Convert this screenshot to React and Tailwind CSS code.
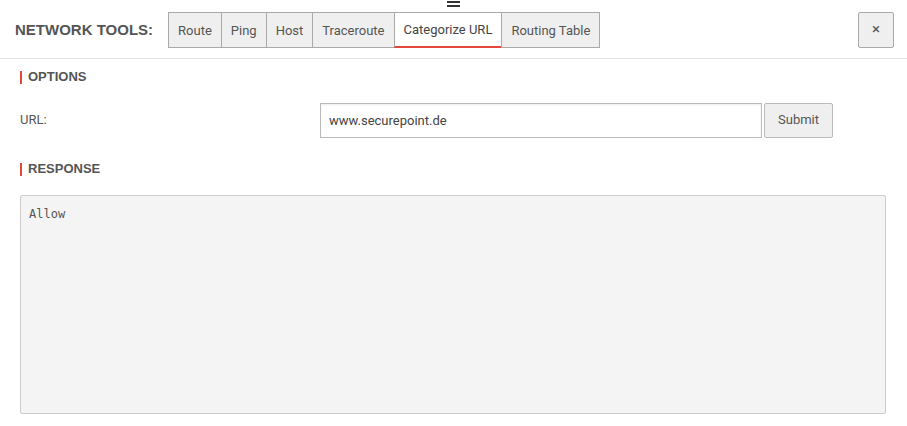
export default function App() {
  const tabs = ["Route", "Ping", "Host", "Traceroute", "Categorize URL", "Routing Table"];
  const active = "Categorize URL";

  return (
    <div className="relative w-[907px] h-[426px] bg-white text-[#555] font-['Roboto','Liberation_Sans',sans-serif] overflow-hidden">
      {/* drag handle */}
      <div className="absolute left-[447px] top-[1px] w-[13px] flex flex-col gap-[2px]">
        <div className="h-[2px] bg-[#333]"></div>
        <div className="h-[2px] bg-[#333]"></div>
      </div>

      {/* header */}
      <div className="flex items-center h-[59px] border-b border-[#e3e3e3] pl-[15px] pr-[13px]">
        <span className="text-[15px] font-bold text-[#555] font-['Liberation_Sans',sans-serif] mr-[15px] mt-[3px]">NETWORK TOOLS:</span>
        <div className="flex h-[36px] mt-[1px]">
          {tabs.map((t) => (
            <button
              key={t}
              className={`relative h-full px-[9px] pt-[2px] -ml-px first:ml-0 text-[13px] border border-[#aaa] ${
                t === active
                  ? "bg-white text-[#444] border-b-[2px] border-b-[#e5483a]"
                  : "bg-[#efefef] text-[#555]"
              }`}
            >
              {t}
            </button>
          ))}
        </div>
        <button className="ml-auto w-[36px] h-[36px] mt-[1px] bg-[#efefef] border border-[#aaa] rounded-[2px] text-[15px] text-[#555] flex items-center justify-center">
          ×
        </button>
      </div>

      {/* body */}
      <div className="px-[20px] pr-[21px]">
        <div className="flex items-center h-[14px] mt-[11px]">
          <div className="w-[2px] h-[13px] bg-[#e5483a] mr-[6px]"></div>
          <span className="text-[13px] font-bold text-[#555] font-['Liberation_Sans',sans-serif]">OPTIONS</span>
        </div>

        <div className="flex items-center mt-[18px] h-[36px]">
          <label className="w-[300px] text-[13px] text-[#555]">URL:</label>
          <input
            className="w-[442px] h-[35px] border border-[#bbb] px-[8px] text-[13px] text-[#444] shadow-[inset_0_1px_2px_rgba(0,0,0,0.08)] outline-none"
            defaultValue="www.securepoint.de"
          />
          <button className="ml-[2px] w-[69px] h-[35px] bg-[#efefef] border border-[#bbb] rounded-[2px] text-[13px] text-[#555]">
            Submit
          </button>
        </div>

        <div className="flex items-center h-[14px] mt-[24px]">
          <div className="w-[2px] h-[13px] bg-[#e5483a] mr-[6px]"></div>
          <span className="text-[13px] font-bold text-[#555] font-['Liberation_Sans',sans-serif]">RESPONSE</span>
        </div>

        <div className="mt-[19px] h-[219px] bg-[#f4f4f4] border border-[#ccc] rounded-[2px] px-[8px] py-[9px]">
          <pre className="text-[12px] text-[#555] font-['DejaVu_Sans_Mono',monospace]">Allow</pre>
        </div>
      </div>
    </div>
  );
}
